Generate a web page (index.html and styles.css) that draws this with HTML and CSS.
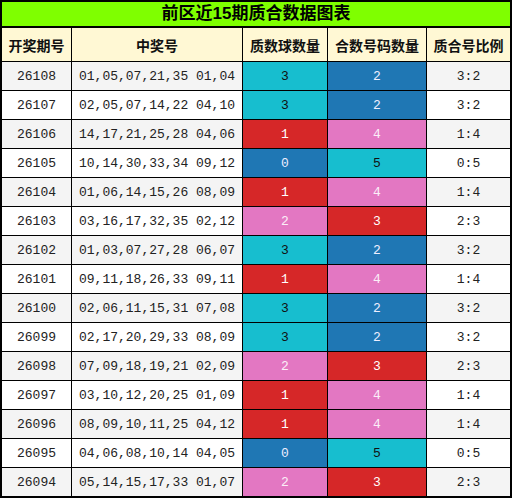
FILE: index.html
```html
<!DOCTYPE html>
<html>
<head>
<meta charset="utf-8">
<title>前区近15期质合数据图表</title>
<link rel="stylesheet" href="styles.css">
</head>
<body>
<div class="chart">
	<div class="chart-title">前区近15期质合数据图表</div>
	<div class="chart-grid">
		<div class="hd">开奖期号</div>
		<div class="hd">中奖号</div>
		<div class="hd">质数球数量</div>
		<div class="hd">合数号码数量</div>
		<div class="hd">质合号比例</div>

		<div class="c odd">26108</div><div class="c odd">01,05,07,21,35 01,04</div><div class="c cyan">3</div><div class="c blue">2</div><div class="c odd">3:2</div>
		<div class="c">26107</div><div class="c">02,05,07,14,22 04,10</div><div class="c cyan">3</div><div class="c blue">2</div><div class="c">3:2</div>
		<div class="c odd">26106</div><div class="c odd">14,17,21,25,28 04,06</div><div class="c red">1</div><div class="c pink">4</div><div class="c odd">1:4</div>
		<div class="c">26105</div><div class="c">10,14,30,33,34 09,12</div><div class="c blue">0</div><div class="c cyan">5</div><div class="c">0:5</div>
		<div class="c odd">26104</div><div class="c odd">01,06,14,15,26 08,09</div><div class="c red">1</div><div class="c pink">4</div><div class="c odd">1:4</div>
		<div class="c">26103</div><div class="c">03,16,17,32,35 02,12</div><div class="c pink">2</div><div class="c red">3</div><div class="c">2:3</div>
		<div class="c odd">26102</div><div class="c odd">01,03,07,27,28 06,07</div><div class="c cyan">3</div><div class="c blue">2</div><div class="c odd">3:2</div>
		<div class="c">26101</div><div class="c">09,11,18,26,33 09,11</div><div class="c red">1</div><div class="c pink">4</div><div class="c">1:4</div>
		<div class="c odd">26100</div><div class="c odd">02,06,11,15,31 07,08</div><div class="c cyan">3</div><div class="c blue">2</div><div class="c odd">3:2</div>
		<div class="c">26099</div><div class="c">02,17,20,29,33 08,09</div><div class="c cyan">3</div><div class="c blue">2</div><div class="c">3:2</div>
		<div class="c odd">26098</div><div class="c odd">07,09,18,19,21 02,09</div><div class="c pink">2</div><div class="c red">3</div><div class="c odd">2:3</div>
		<div class="c">26097</div><div class="c">03,10,12,20,25 01,09</div><div class="c red">1</div><div class="c pink">4</div><div class="c">1:4</div>
		<div class="c odd">26096</div><div class="c odd">08,09,10,11,25 04,12</div><div class="c red">1</div><div class="c pink">4</div><div class="c odd">1:4</div>
		<div class="c">26095</div><div class="c">04,06,08,10,14 04,05</div><div class="c blue">0</div><div class="c cyan">5</div><div class="c">0:5</div>
		<div class="c odd">26094</div><div class="c odd">05,14,15,17,33 01,07</div><div class="c pink">2</div><div class="c red">3</div><div class="c odd">2:3</div>
	</div>
</div>
</body>
</html>
```

FILE: styles.css
```css
body{
	margin:0;
	background:#fff;
}
.chart{
	width:512px;
	box-sizing:border-box;
	border:2px solid #000;
	font-family:"Liberation Sans","Noto Sans CJK SC",sans-serif;
}
.chart-title{
	height:24px;
	line-height:24px;
	background:#7fff00;
	border-bottom:2px solid #000;
	text-align:center;
	font-size:17px;
	font-weight:bold;
	color:#000;
}
.chart-grid{
	display:grid;
	grid-template-columns:69px 170px 84px 98px 83px;
	grid-template-rows:33px;
	grid-auto-rows:28px;
	gap:1px;
	background:#000;
}
.chart-grid .hd{
	background:#fff8d4;
	display:flex;
	align-items:center;
	justify-content:center;
	font-size:14px;
	font-weight:bold;
	color:#111;
}
.chart-grid .c{
	background:#fff;
	display:flex;
	align-items:center;
	justify-content:center;
	font-family:"Liberation Mono","DejaVu Sans Mono",monospace;
	font-size:13px;
	color:#222;
}
.chart-grid .c.odd{ background:#f4f4f4; }
.chart-grid .c.cyan{ background:#17becf; color:#111; }
.chart-grid .c.blue{ background:#1f77b4; color:#eef; }
.chart-grid .c.red{ background:#d62728; color:#fff; }
.chart-grid .c.pink{ background:#e377c2; color:#fbeef7; }
```
